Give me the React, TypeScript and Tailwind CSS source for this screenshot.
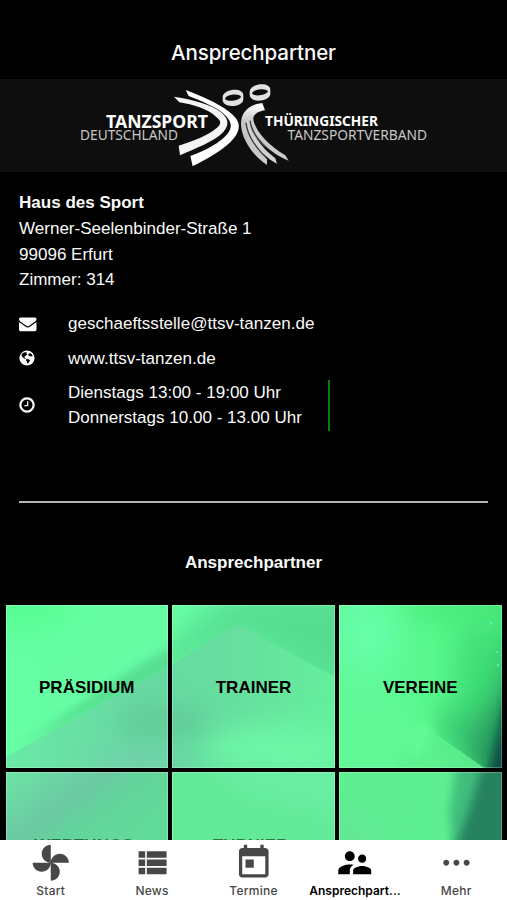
import React from "react";

const TILE = 162.6;
const STEP = 166.9;

const TILES = [
  { label: "PRÄSIDIUM", col: 0, row: 0 },
  { label: "TRAINER", col: 1, row: 0 },
  { label: "VEREINE", col: 2, row: 0 },
  { label: "WERTUNGS-", col: 0, row: 1 },
  { label: "TURNIER-", col: 1, row: 1 },
  { label: "", col: 2, row: 1 },
];

// 24x24 material glyphs
const TABS = [
  {
    label: "Start",
    path: "M12 12c0-3 2.5-5.5 5.5-5.5S23 9 23 12H12zm0 0c0 3-2.5 5.5-5.5 5.5S1 15 1 12h11zm0 0c-3 0-5.5-2.5-5.5-5.5S9 1 12 1v11zm0 0c3 0 5.5 2.5 5.5 5.5S15 23 12 23V12z",
  },
  {
    label: "News",
    path: "M4 14h4v-4H4v4zm0 5h4v-4H4v4zM4 9h4V5H4v4zm5 5h12v-4H9v4zm0 5h12v-4H9v4zM9 5v4h12V5H9z",
  },
  {
    label: "Termine",
    path: "M19 3h-1V1h-2v2H8V1H6v2H5c-1.11 0-1.99.9-1.99 2L3 19c0 1.1.89 2 2 2h14c1.1 0 2-.9 2-2V5c0-1.1-.9-2-2-2zm0 16H5V8h14v11zM7 10h5v5H7z",
  },
  {
    label: "Ansprechpart...",
    active: true,
    path: "M16.5 12c1.38 0 2.49-1.12 2.49-2.5S17.88 7 16.5 7C15.12 7 14 8.12 14 9.5s1.12 2.5 2.5 2.5zM9 11c1.66 0 2.99-1.34 2.99-3S10.66 5 9 5C7.34 5 6 6.34 6 8s1.34 3 3 3zm7.5 3c-1.83 0-5.5.92-5.5 2.75V19h11v-2.25c0-1.83-3.67-2.75-5.5-2.75zM9 13c-2.33 0-7 1.17-7 3.5V19h7v-2.25c0-.85.33-2.34 2.37-3.47C10.5 13.1 9.66 13 9 13z",
  },
  {
    label: "Mehr",
    path: "M5.6 10.2c-1 0-1.8.8-1.8 1.8s.8 1.8 1.8 1.8 1.8-.8 1.8-1.8-.8-1.8-1.8-1.8zm12.4 0c-1 0-1.8.8-1.8 1.8s.8 1.8 1.8 1.8 1.8-.8 1.8-1.8-.8-1.8-1.8-1.8zm-6.2 0c-1 0-1.8.8-1.8 1.8s.8 1.8 1.8 1.8 1.8-.8 1.8-1.8-.8-1.8-1.8-1.8z",
  },
];

function EnvelopeIcon() {
  return (
    <svg viewBox="0 0 1792 1792" className="w-[17.5px] h-[17.5px]" fill="currentColor">
      <path d="M1792 710v794q0 66-47 113t-113 47h-1472q-66 0-113-47t-47-113v-794q44 49 101 87 362 246 497 345 57 42 92.5 65.5t94.5 48 110 24.5h2q51 0 110-24.5t94.5-48 92.5-65.5q170-123 498-345 57-39 100-87zm0-294q0 79-49 151t-122 123q-376 261-468 325-10 7-42.5 31t-54 38.5-52 32.5-57.5 27-50 9h-2q-23 0-50-9t-57.5-27-52-32.5-54-38.5-42.5-31q-91-64-262-182.5t-205-142.5q-62-42-117-115.5t-55-136.5q0-78 41.5-130t118.5-52h1472q65 0 112.5 47t47.5 113z" />
    </svg>
  );
}

function GlobeIcon() {
  return (
    <svg viewBox="0 0 16 16" className="w-[16px] h-[16px]">
      <circle cx="8" cy="8" r="7.6" fill="#fff" />
      <path d="M3.2 3.6L5.6 2.2 8 2.4 7.3 3.5 8.4 4.3 7 5.6 5.8 6.2 5.4 7.5 6.8 8.4 6.2 9.2 4.6 8.1 3 6.4 2.4 5z" fill="#000" />
      <path d="M9.3 3.9L11.2 3 13 4.4 13.6 5.9 12.3 6.4 11 5.9 9.9 6.3z" fill="#000" />
      <path d="M7.4 9L9.6 9.2 11 10.2 10.2 12 8.8 13.6 8 13.2 7.9 11.4 6.9 10.3z" fill="#000" />
    </svg>
  );
}

function ClockIcon() {
  return (
    <svg viewBox="0 0 1792 1792" className="w-[18px] h-[18px] -ml-px" fill="currentColor">
      <path d="M1024 544v448q0 14-9 23t-23 9h-320q-14 0-23-9t-9-23v-64q0-14 9-23t23-9h224v-352q0-14 9-23t23-9h64q14 0 23 9t9 23zm416 352q0-148-73-273t-198-198-273-73-273 73-198 198-73 273 73 273 198 198 273 73 273-73 198-198 73-273zm224 0q0 209-103 385.5t-279.5 279.5-385.5 103-385.5-103-279.5-279.5-103-385.5 103-385.5 279.5-279.5 385.5-103 385.5 103 279.5 279.5 103 385.5z" />
    </svg>
  );
}

const HEAD =
  "M-31 -3C-29 -17 -10 -24 5 -24C20 -24 31 -18 31 -8L31 6C29 18 12 25 -4 25C-20 25 -30 18 -31 8ZM-24 3C-20 13 18 11 24 -3C20 -13 -18 -11 -24 3Z";

function Logo() {
  return (
    <svg viewBox="0 79 507 93" className="w-full h-full">
      <defs>
        <linearGradient id="ribbon" gradientUnits="userSpaceOnUse" x1="260" y1="90" x2="235" y2="240">
          <stop offset="0" stopColor="#fafafa" />
          <stop offset="0.35" stopColor="#c4c4c4" />
          <stop offset="1" stopColor="#c8c8c8" />
        </linearGradient>
      </defs>
      <g fill="#fff" fontFamily="'Noto Sans', 'Open Sans', sans-serif">
        <text x="106" y="127.5" fontSize="17.3" fontWeight="700" textLength="102" lengthAdjust="spacingAndGlyphs">TANZSPORT</text>
        <text x="80" y="140.2" fontSize="14.6" fontWeight="400" fill="#c8c8c8" textLength="98" lengthAdjust="spacingAndGlyphs">DEUTSCHLAND</text>
        <text x="265" y="125.5" fontSize="14.8" fontWeight="700" textLength="113" lengthAdjust="spacingAndGlyphs">THÜRINGISCHER</text>
        <text x="287.5" y="140.2" fontSize="14.6" fontWeight="400" fill="#c8c8c8" textLength="139.5" lengthAdjust="spacingAndGlyphs">TANZSPORTVERBAND</text>
      </g>
      <g transform="translate(170 76) scale(0.33333)">
        {/* left dancer */}
        <path d="M47 42C110 66 160 90 188 116C212 138 212 160 192 186C165 220 115 246 68 271L61 240C110 222 150 200 172 174C187 155 186 140 168 120C142 93 95 76 56 60Z" fill="#fff" />
        <path d="M12 62C75 72 125 86 152 108C176 127 179 146 160 168C130 199 75 217 30 238L26 209C75 194 113 178 140 156C156 142 153 134 138 122C112 98 70 86 28 79Z" fill="#f4f4f4" />
        {/* right dancer */}
        <path d="M277 81L285 103C268 106 252 112 249 128C240 140 238 158 250 180C262 206 282 236 291 249V267C250 240 214 190 213 143C213 106 240 84 277 81Z" fill="url(#ribbon)" />
        <path d="M240 124C238 160 262 205 316 247L321 263C268 235 228 180 230 136Z" fill="#d2d2d2" />
        <path d="M250 118C246 155 290 205 346 238L356 254C292 226 238 184 240 130Z" fill="#cbcbcb" />
        <path d="M228 140C232 180 262 225 305 258M240 134C244 170 275 212 336 249" stroke="#0e0e0e" strokeWidth="4" fill="none" opacity="0.75" />
        {/* heads */}
        <g fillRule="evenodd" fill="#e2e2e2">
          <path transform="translate(189 65)" d={HEAD} />
          <path transform="translate(270 49)" d={HEAD} />
        </g>
      </g>
    </svg>
  );
}

// One continuous light backdrop, every tile shows its own section of it.
function Backdrop({ col, row }: { col: number; row: number }) {
  const id = `t${col}${row}`;
  const soft = `url(#${id}soft)`;
  const haze = `url(#${id}haze)`;
  return (
    <svg
      className="absolute inset-0 w-full h-full"
      preserveAspectRatio="none"
      viewBox={`${col * STEP} ${row * STEP} ${TILE} ${TILE}`}
    >
      <defs>
        <linearGradient id={`${id}base`} gradientUnits="userSpaceOnUse" x1="0" y1="0" x2="496" y2="0">
          <stop offset="0" stopColor="#66ffa4" />
          <stop offset="0.3" stopColor="#66fca4" />
          <stop offset="0.72" stopColor="#62fa9e" />
          <stop offset="0.86" stopColor="#58f88c" />
          <stop offset="1" stopColor="#48e67c" />
        </linearGradient>
        <linearGradient id={`${id}wedge`} gradientUnits="userSpaceOnUse" x1="0" y1="0" x2="335" y2="0">
          <stop offset="0" stopColor="#6ae9a6" />
          <stop offset="0.4" stopColor="#68d8a3" />
          <stop offset="0.7" stopColor="#66df9f" />
          <stop offset="1" stopColor="#64f09b" />
        </linearGradient>
        <linearGradient id={`${id}low`} gradientUnits="userSpaceOnUse" x1="10" y1="165" x2="95" y2="275">
          <stop offset="0" stopColor="#6ce2a4" />
          <stop offset="0.4" stopColor="#6bc9a4" />
          <stop offset="0.6" stopColor="#63d49c" />
          <stop offset="1" stopColor="#60dc98" />
        </linearGradient>
        <filter id={`${id}soft`} filterUnits="userSpaceOnUse" x="-100" y="-100" width="700" height="540">
          <feGaussianBlur stdDeviation="5" />
        </filter>
        <filter id={`${id}haze`} filterUnits="userSpaceOnUse" x="-100" y="-100" width="700" height="540">
          <feGaussianBlur stdDeviation="14" />
        </filter>
      </defs>
      {row === 0 && (
        <g>
          <rect width="500" height="170" fill={`url(#${id}base)`} />
          <ellipse cx="10" cy="0" rx="60" ry="30" fill="#58fd94" filter={haze} />
          {/* shadow above the roof line */}
          <path d="M12 143L80 95L130 62L165 42L200 10L232 -10L400 -20L400 90L318 80L235 30L165 66Z" fill="#55d88f" opacity="0.85" filter={`url(#${id}${col === 0 ? "soft" : "haze"})`} />
          <path d="M0 152L165 61L232 19L345 80V168H0Z" fill={`url(#${id}wedge)`} />
          <ellipse cx="160" cy="118" rx="50" ry="16" fill="#60cb99" filter={haze} />
          <ellipse cx="130" cy="162" rx="50" ry="12" fill="#74ccae" filter={haze} />
          <ellipse cx="275" cy="145" rx="75" ry="26" fill="#6cf6a5" filter={haze} />
          {col === 2 && (
            <g>
              <rect x="333" width="170" height="170" fill={`url(#${id}base)`} />
              <ellipse cx="450" cy="0" rx="50" ry="12" fill="#46e878" filter={haze} />
              <ellipse cx="365" cy="30" rx="22" ry="28" fill="#68ffac" filter={haze} />
              <ellipse cx="475" cy="80" rx="20" ry="60" fill="#3edc74" filter={haze} />
              <path d="M440 100L430 130L478 166H520V70L480 110Z" fill="#3bc772" opacity="0.9" filter={haze} />
              <path d="M512 20L494 90L464 145L474 180H530Z" fill="#209058" opacity="0.9" filter={haze} />
              <path d="M505 75L495 120L481 175H515V75Z" fill="#0a4f46" filter={soft} />
              <path d="M380 168L420 122L428 127L482 165V168Z" fill="#5df08f" opacity="0.85" />
              <path d="M412 116L426 122L418 146L404 152Z" fill="#63ff98" opacity="0.8" filter={soft} />
              <path d="M333 60L415 125L380 175H325Z" fill="#60f896" filter={haze} />
              <circle cx="486" cy="18" r="1.5" fill="#58f5b5" />
              <circle cx="480" cy="27" r="2.2" fill="#47f173" />
              <circle cx="492" cy="47" r="1.2" fill="#52ee8f" />
              <circle cx="493" cy="60" r="1.4" fill="#5ce9b5" />
            </g>
          )}
        </g>
      )}
      {row === 1 && (
        <g>
          <rect y="166" width="166" height="170" fill={`url(#${id}low)`} />
          <rect x="166" y="166" width="167" height="170" fill="#62ea98" />
          {col === 1 && <path d="M190 150L245 190L360 215V150Z" fill="#6cf0a6" opacity="0.8" filter={haze} />}
          {col === 2 && (
            <g>
              <rect x="333" y="166" width="170" height="170" fill="#5eef92" />
              <ellipse cx="345" cy="230" rx="25" ry="30" fill="#64e896" filter={haze} />
              <path d="M452 155L444 205L448 250H515V155Z" fill="#3fbe7c" filter={soft} />
              <path d="M480 150L464 205L446 255H515V150Z" fill="#26815f" filter={soft} />
            </g>
          )}
        </g>
      )}
    </svg>
  );
}

export default function App() {
  return (
    <div className="w-[507px] h-[900px] bg-black text-[#fafafa] overflow-hidden flex flex-col font-['Liberation_Sans',Arial,sans-serif]">
      <header className="h-[79px] shrink-0 flex items-end justify-center pb-[12px]">
        <h1 className="font-['Inter',sans-serif] text-[20.5px] leading-[28px] font-medium tracking-[-0.1px]">Ansprechpartner</h1>
      </header>

      <div className="h-[93px] shrink-0 bg-[#0e0e0e]">
        <Logo />
      </div>

      <main className="flex-1 min-h-0 overflow-hidden">
        <section className="px-[19px] pt-[18.3px] text-[17.05px] leading-[25.7px]">
          <p className="font-bold">Haus des Sport</p>
          <p>Werner-Seelenbinder-Straße 1</p>
          <p>99096 Erfurt</p>
          <p>Zimmer: 314</p>

          <div className="mt-[18.2px] flex flex-col gap-[8.5px]">
            <div className="flex items-center">
              <span className="w-[49px]"><EnvelopeIcon /></span>
              <span>geschaeftsstelle@ttsv-tanzen.de</span>
            </div>
            <div className="flex items-center">
              <span className="w-[49px]"><GlobeIcon /></span>
              <span>www.ttsv-tanzen.de</span>
            </div>
            <div className="flex items-center">
              <span className="w-[49px]"><ClockIcon /></span>
              <div className="w-[262px] border-r-2 border-[#067d06]">
                <p>Dienstags 13:00 - 19:00 Uhr</p>
                <p>Donnerstags 10.00 - 13.00 Uhr</p>
              </div>
            </div>
          </div>

          <hr className="mt-[69.5px] border-t-2 border-[#b4b4b4]" />
          <h2 className="mt-[47px] text-center font-bold">Ansprechpartner</h2>
        </section>

        <section className="mt-[30px] mx-[5.5px] grid grid-cols-3 gap-[4.3px]">
          {TILES.map((tile) => (
            <div
              key={`${tile.col}-${tile.row}`}
              className="relative h-[162.6px] flex flex-col items-center overflow-hidden text-black"
            >
              <Backdrop col={tile.col} row={tile.row} />
              <div className="absolute inset-0 border border-white/25" />
              <p className={`relative text-[17px] leading-[26px] font-bold ${tile.row === 1 ? "pt-[61px] opacity-50" : "pt-[69.5px]"}`}>
                {tile.label}
              </p>
            </div>
          ))}
        </section>
      </main>

      <nav className="h-[60px] shrink-0 bg-white grid grid-cols-5 font-['Inter',sans-serif]">
        {TABS.map((tab) => (
          <div
            key={tab.label}
            className={`flex flex-col items-center pt-[3px] ${tab.active ? "text-black" : "text-[#474747]"}`}
          >
            <svg viewBox="0 0 24 24" className="w-[39.5px] h-[39.5px] shrink-0" fill="currentColor">
              <path d={tab.path} />
            </svg>
            <span className={`text-[12px] leading-[16px] ${tab.active ? "font-semibold" : "font-medium tracking-[0.25px]"}`}>
              {tab.label}
            </span>
          </div>
        ))}
      </nav>
    </div>
  );
}
